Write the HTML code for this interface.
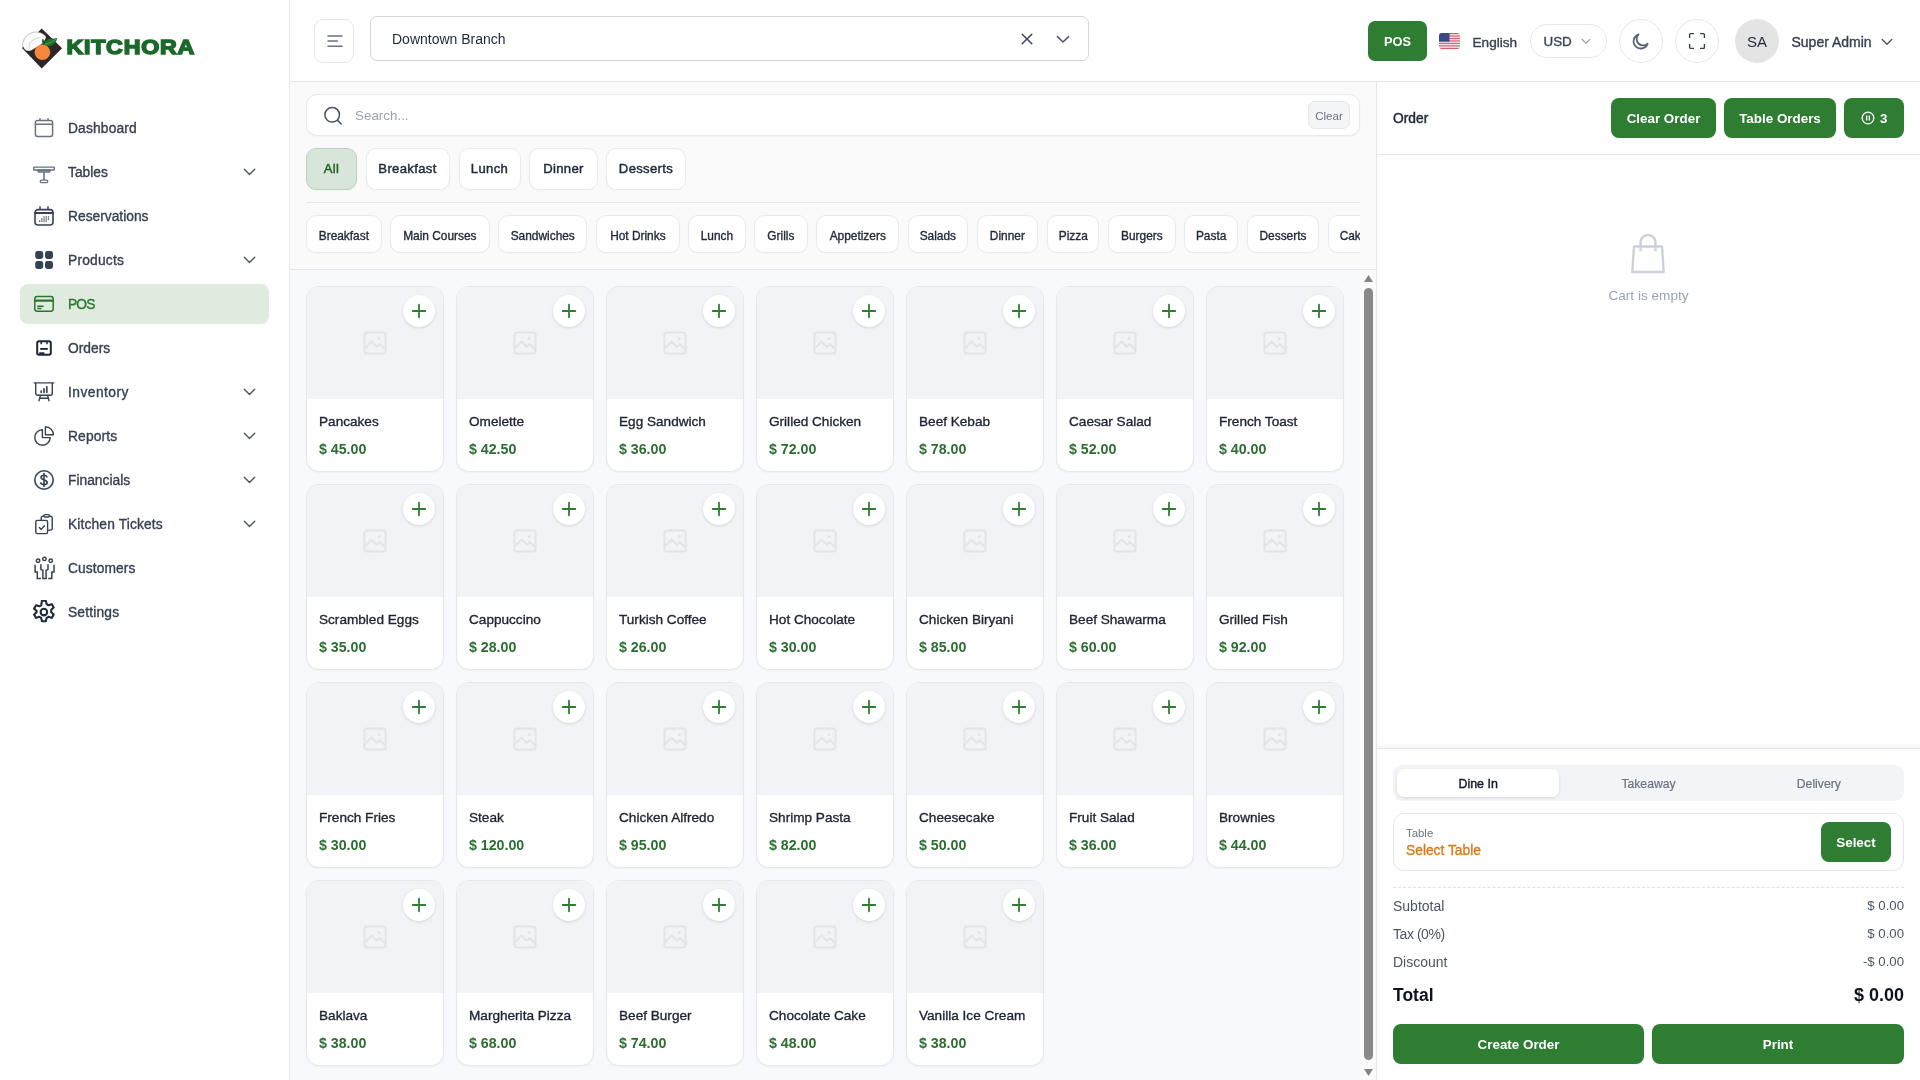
<!DOCTYPE html>
<html lang="en">
<head>
<meta charset="utf-8">
<title>Kitchora POS</title>
<style>
*{box-sizing:border-box;margin:0;padding:0}
html,body{width:1920px;height:1080px;overflow:hidden;background:#f8f9fc;font-family:"Liberation Sans",sans-serif;color:#1f2937}
div,span,svg{position:absolute}
#wrap{left:0;top:0;width:1920px;height:1080px;will-change:transform}
#side{left:0;top:0;width:290px;height:1080px;background:#fff;border-right:1px solid #e8e9ed}
.nav{left:20px;width:249px;height:40px;border-radius:8px;color:#374151;font-size:13.8px}
.nav svg.ic{left:12px;top:8px;width:24px;height:24px}
.nav span{left:48px;top:1px;line-height:40px;white-space:nowrap;-webkit-text-stroke:.35px currentColor}
.nav svg.ch{left:222.5px;top:15.7px;width:13px;height:8.4px}
.nav.on{background:#deebde;color:#2c7531}
#head{left:290px;top:0;width:1630px;height:82px;background:#fff;border-bottom:1px solid #e6e7eb}
#mid{left:290px;top:82px;width:1086px;height:998px;background:#f8f9fc}
#top{left:0;top:0;width:1086px;height:187px;background:#fafafa}
.pill{background:#fff;border:1px solid #e8eaed;border-radius:10px;text-align:center;color:#1f2937;white-space:nowrap;box-shadow:0 1px 2px rgba(16,24,40,.025)}
.cat{top:148px;height:42px;line-height:40.5px;font-size:13.1px;letter-spacing:.33px;-webkit-text-stroke:.45px currentColor}
.sub{top:215px;height:38px;line-height:41.5px;font-size:11.9px;-webkit-text-stroke:.35px currentColor}
.card{width:138px;height:186px;background:#fff;border:1px solid #e5e7eb;border-radius:13px;overflow:hidden;box-shadow:0 1px 2px rgba(16,24,40,.04)}
.card .im{left:0;top:0;width:136px;height:112px;background:#f2f3f7}
.card .im svg{left:56px;top:44px;width:24px;height:24px}
.card .pl{left:96px;top:8px;width:32px;height:32px;border-radius:50%;background:#fff;box-shadow:0 1px 3px rgba(0,0,0,.13)}
.card .pl svg{left:7px;top:7px;width:18px;height:18px}
.card .nm{left:12px;top:126px;font-size:13.6px;line-height:18px;color:#1f2433;white-space:nowrap;-webkit-text-stroke:.35px currentColor}
.card .pr{left:12px;top:152.9px;font-size:14.2px;line-height:18px;font-weight:bold;color:#2c6e31;white-space:nowrap}
#right{left:1376px;top:82px;width:544px;height:998px;background:#fff;border-left:1px solid #e5e7eb}
.gbtn{background:#2e7d32;color:#fff;border-radius:8px;text-align:center;font-weight:bold;font-size:13.4px;white-space:nowrap;height:40px;line-height:41px}
.row{left:1393px;width:511px;height:20px;font-size:14px;line-height:20px;color:#4b5563}
.row b{position:absolute;right:0;top:0;font-weight:normal;font-size:13.2px}
</style>
</head>
<body>
<div id="wrap">
<div id="side">
<svg style="left:18px;top:24px;width:190px;height:50px" viewBox="18 24 190 50">
<path d="M41.700 28.600 62.100 48.300 41.700 68.400 22 48.100z" fill="#2f2725"/>
<path d="M23.400 47.100C22.300 45.500 22.400 43.500 23.200 41.800 24 37.500 27.500 34 31.300 33 33 32.200 35 31.900 36.800 32.100 39.500 32.300 42 33.200 43.800 34.600 45 35.300 45.900 36.300 46.100 37.400L44.600 40.500 41.900 43.900 31.300 50.400C29.300 51.200 26.800 51 25.300 49.900 24.400 49.200 23.800 48.200 23.400 47.100Z" fill="#fbfdfc" stroke="#5a5a5a" stroke-width=".35"/>
<path d="M28.800 43.800C31 41 35 38.600 40.500 37.300M29.600 48.600C29 47 29.200 45.200 30.400 43.600" fill="none" stroke="#8a8f8c" stroke-width=".35"/>
<circle cx="42.400" cy="52.300" r="7.800" fill="#f6883c"/>
<path d="M43.800 44.500C46 45.900 48.800 46.300 50.900 45.700 54.200 44.600 56.600 41.700 57.200 37.900 55.400 38.600 53.300 38.300 51.200 38.500 48.600 38.800 46.600 39.800 45.400 41.300 44.600 42.300 44 43.400 43.800 44.500Z" fill="#1f6f2f"/>
<path d="M42.900 38.400C41.900 39.600 41.800 41.600 42.600 43 43.300 44 44.500 44.400 45.400 43.900 44.600 42.200 44 40 42.900 38.400Z" fill="#1b6129"/>
<path d="M44.600 44.300C48.400 43.700 52.800 41.800 56 38.900" fill="none" stroke="#7ed08a" stroke-width=".5"/>
<g transform="translate(66.400,54.200) scale(1.126,1)"><text x="0" y="0" font-family="Liberation Sans, sans-serif" font-weight="bold" font-size="20.600" fill="#1b692a" stroke="#1b692a" stroke-width="1.500" stroke-linejoin="miter" letter-spacing="0.700">KITCHORA</text></g>
</svg>
<div class="nav" style="top:108px"><svg class="ic" viewBox="0 0 24 24" fill="none" ><g stroke="#6b7280" stroke-width="1.500" stroke-linecap="round"><rect x="3.400" y="4.500" width="17.200" height="16" rx="2.200"/><path d="M3.600 8.300h16.800M8 2.800v1.500M16 2.800v1.500"/></g></svg><span style="letter-spacing:0.15px">Dashboard</span></div>
<div class="nav" style="top:152px"><svg class="ic" viewBox="0 0 24 24" fill="none" ><g stroke="#6b7280" stroke-width="1.400" stroke-linejoin="round"><rect x="1.700" y="7.100" width="20.600" height="2.900" rx=".4"/><path d="M5.600 10.200h12.800l-.8 1.900H6.400z" fill="#9aa0ab"/><path d="M12 12.200v7.800" stroke-width="1.600"/><rect x="8.300" y="20.100" width="7.400" height="2.500" rx="1.200"/></g></svg><span style="letter-spacing:0px">Tables</span><svg class="ch" viewBox="0 0 14 9" fill="none"><path d="M1.400 1.400 7 7l5.600-5.600" stroke="#4b5563" stroke-width="1.500" stroke-linecap="round" stroke-linejoin="round"/></svg></div>
<div class="nav" style="top:196px"><svg class="ic" viewBox="0 0 24 24" fill="none" ><g stroke="#374151" stroke-width="1.600" stroke-linecap="round"><rect x="3" y="5.600" width="18" height="15.400" rx="3"/><path d="M3.200 9h17.600" stroke-width="1.800"/><path d="M8 2.800v2.400M16 2.800v2.400" stroke-width="1.400"/></g><g fill="#374151"><rect x="7" y="16.400" width="1.300" height="1.300"/><rect x="9.200" y="16.400" width="1.300" height="1.300"/><rect x="9.200" y="14.400" width="1.300" height="1.300"/><rect x="11.400" y="16.400" width="1.300" height="1.300"/><rect x="11.400" y="14.400" width="1.300" height="1.300"/><rect x="11.400" y="12.400" width="1.300" height="1.200"/><rect x="13.600" y="16.400" width="1.300" height="1.300"/><rect x="13.600" y="14.400" width="1.300" height="1.300"/><rect x="13.600" y="12.400" width="1.300" height="1.200"/><rect x="15.800" y="12.400" width="1.300" height="1.200"/><rect x="15.800" y="14.400" width="1.300" height="1.300"/></g></svg><span style="letter-spacing:0px">Reservations</span></div>
<div class="nav" style="top:240px"><svg class="ic" viewBox="0 0 24 24" fill="none" ><g fill="#334155"><rect x="3.2" y="3" width="8" height="8" rx="2.4"/><rect x="13" y="3" width="8" height="8" rx="2.4"/><rect x="3.2" y="13" width="8" height="8" rx="2.4"/><rect x="13" y="13" width="8" height="8" rx="2.4"/></g></svg><span style="letter-spacing:0.2px">Products</span><svg class="ch" viewBox="0 0 14 9" fill="none"><path d="M1.400 1.400 7 7l5.600-5.600" stroke="#4b5563" stroke-width="1.500" stroke-linecap="round" stroke-linejoin="round"/></svg></div>
<div class="nav on" style="top:284px"><svg class="ic" viewBox="0 0 24 24" fill="none" ><g stroke="#2c7531" stroke-linecap="round"><rect x="2.800" y="4.600" width="18.400" height="14.600" rx="2.400" stroke-width="1.500"/><path d="M3 8.600h18" stroke-width="2.200"/><path d="M5.800 14.200h5.400M5.800 16.500h3.200" stroke-width="1.400"/></g></svg><span style="letter-spacing:-0.9px">POS</span></div>
<div class="nav" style="top:328px"><svg class="ic" viewBox="0 0 24 24" fill="none" ><g stroke="#1f2937" stroke-width="2"><rect x="5.200" y="5.200" width="13.600" height="13.600" rx="1.800"/><path d="M8.200 12.900h7.600" stroke-width="1.900"/><path d="M9.200 6v2.200M15 6v2.200" stroke-width="1.500"/></g><rect x="7.200" y="16.300" width="5.200" height="2.200" fill="#1f2937"/></svg><span style="letter-spacing:0px">Orders</span></div>
<div class="nav" style="top:372px"><svg class="ic" viewBox="0 0 24 24" fill="none" ><g stroke="#374151" stroke-width="1.400" stroke-linecap="round" stroke-linejoin="round"><path d="M2.200 2.900h19.600M3.700 3v10.300a2 2 0 0 0 2 2h12.600a2 2 0 0 0 2-2V3M8.400 15.500 7 20.800M15.600 15.500l1.400 5.300M7.800 18.200h8.400"/><path d="M9.200 11v1.300M12 8.800v3.500M14.800 6.800v5.500" stroke-width="1.700"/></g></svg><span style="letter-spacing:0.45px">Inventory</span><svg class="ch" viewBox="0 0 14 9" fill="none"><path d="M1.400 1.400 7 7l5.600-5.600" stroke="#4b5563" stroke-width="1.500" stroke-linecap="round" stroke-linejoin="round"/></svg></div>
<div class="nav" style="top:416px"><svg class="ic" viewBox="0 0 24 24" fill="none" ><g stroke="#374151" stroke-width="1.400" stroke-linejoin="round"><path d="M10.400 5.800a7.700 7.700 0 1 0 7.800 7.800h-7.800z"/><path d="M13.400 2.800v8h8a8 8 0 0 0-8-8z"/></g></svg><span style="letter-spacing:0.15px">Reports</span><svg class="ch" viewBox="0 0 14 9" fill="none"><path d="M1.400 1.400 7 7l5.600-5.600" stroke="#4b5563" stroke-width="1.500" stroke-linecap="round" stroke-linejoin="round"/></svg></div>
<div class="nav" style="top:460px"><svg class="ic" viewBox="0 0 24 24" fill="none" ><g stroke="#374151" stroke-width="1.6" stroke-linecap="round"><circle cx="12" cy="12" r="9.2"/><path d="M15 8.8c-.6-1-1.700-1.500-3-1.500-1.800 0-3 .9-3 2.300 0 3 6.200 1.600 6.200 4.700 0 1.500-1.400 2.400-3.200 2.400-1.500 0-2.700-.6-3.300-1.700M12 5.600v12.800"/></g></svg><span style="letter-spacing:0px">Financials</span><svg class="ch" viewBox="0 0 14 9" fill="none"><path d="M1.400 1.400 7 7l5.600-5.600" stroke="#4b5563" stroke-width="1.500" stroke-linecap="round" stroke-linejoin="round"/></svg></div>
<div class="nav" style="top:504px"><svg class="ic" viewBox="0 0 24 24" fill="none" ><g stroke="#374151" stroke-width="1.400" stroke-linejoin="round" stroke-linecap="round"><path d="M9.200 8V6a1.700 1.700 0 0 1 1.700-1.700h7.600A1.700 1.700 0 0 1 20.200 6V16.400a1.700 1.700 0 0 1-1.700 1.700H15.800"/><rect x="12" y="2.600" width="5.400" height="2.400" rx="1.200" fill="#fff"/><rect x="3.800" y="8.400" width="11.800" height="13.200" rx="1.600" fill="#fff"/><path d="M7.400 15.600l1.800 1.800 3.200-3.600"/></g></svg><span style="letter-spacing:0.13px">Kitchen Tickets</span><svg class="ch" viewBox="0 0 14 9" fill="none"><path d="M1.400 1.400 7 7l5.600-5.600" stroke="#4b5563" stroke-width="1.500" stroke-linecap="round" stroke-linejoin="round"/></svg></div>
<div class="nav" style="top:548px"><svg class="ic" viewBox="0 0 24 24" fill="none" ><g stroke="#374151" stroke-width="1.500" stroke-linecap="butt" stroke-linejoin="miter"><circle cx="12.400" cy="2.900" r="1.700"/><circle cx="6.100" cy="4.800" r="1.700"/><circle cx="18.700" cy="4.800" r="1.700"/><path d="M3.100 8.800V15.900H5.300V22.600H8.900M8.900 8.200V13.300L10.900 14.500V22.600H14.100V14.500L16 13.300V8.200M22 8.800V15.900H19.800V22.600H16.200"/></g></svg><span style="letter-spacing:0.08px">Customers</span></div>
<div class="nav" style="top:592px"><svg class="ic" viewBox="0 0 24 24" fill="none" ><g transform="translate(11.900 12.100) scale(1.090) translate(-12 -12)" stroke="#1f2937" stroke-width="1.900" stroke-linejoin="round"><path d="M10.200 1.600h3.600l.7 3.100 1.700 1 3-1 1.800 3.100-2.300 2.100v2.200l2.300 2.100-1.800 3.100-3-1-1.700 1-.7 3.100h-3.600l-.7-3.100-1.700-1-3 1-1.800-3.100 2.300-2.100V10.900L3 8.800l1.800-3.100 3 1 1.700-1z"/><circle cx="12" cy="12" r="3"/></g></svg><span style="letter-spacing:0.17px">Settings</span></div>
</div>
<div id="head">
<div style="left:24px;top:19px;width:40px;height:44px;border:1px solid #e5e7eb;border-radius:9px;background:#fff"><svg style="left:10.500px;top:12px;width:18px;height:18px" viewBox="0 0 18 18"><path d="M2 4h14M2 9h9.500M2 14.200h14" stroke="#6b7280" stroke-width="1.500" stroke-linecap="round"/></svg></div>
<div style="left:80px;top:16px;width:719px;height:45px;border:1px solid #d4d6da;border-radius:7px;background:#fff"><span style="left:21px;top:0;line-height:44px;font-size:14px;color:#1f2937;white-space:nowrap">Downtown Branch</span><svg style="left:650px;top:16px;width:12px;height:12px" viewBox="0 0 12 12"><path d="M1.200 1.200l9.600 9.600M10.800 1.200l-9.600 9.600" stroke="#374151" stroke-width="1.400" stroke-linecap="round"/></svg><svg style="left:685px;top:18px;width:14px;height:9px" viewBox="0 0 14 9"><path d="M1.400 1.600 7 7l5.600-5.400" stroke="#4b5563" stroke-width="1.500" stroke-linecap="round" stroke-linejoin="round" fill="none"/></svg></div>
<div class="gbtn" style="left:1078px;top:21px;width:59px;height:40px;line-height:41px;font-size:12.800px;border-radius:7px">POS</div>
<svg style="left:1149px;top:33px;width:21px;height:16px;border-radius:3px;overflow:hidden" viewBox="0 0 21 16"><rect width="21" height="16" fill="#f4f4f6"/><g fill="#dc5d69"><rect y="0" width="21" height="1.250"/><rect y="2.450" width="21" height="1.250"/><rect y="4.900" width="21" height="1.250"/><rect y="7.350" width="21" height="1.250"/><rect y="9.800" width="21" height="1.250"/><rect y="12.250" width="21" height="1.250"/><rect y="14.750" width="21" height="1.250"/></g><rect width="10.500" height="8.600" fill="#3b4a82"/></svg>
<span style="left:1182.500px;top:32.500px;line-height:20px;font-size:13.600px;color:#374151;-webkit-text-stroke:.35px currentColor">English</span>
<div style="left:1240px;top:24px;width:77px;height:34px;border:1px solid #e5e7eb;border-radius:17px;background:#fff"><span style="left:12.500px;top:0;line-height:33px;font-size:13.400px;color:#374151;-webkit-text-stroke:.35px currentColor">USD</span><svg style="left:50px;top:13px;width:10px;height:7px" viewBox="0 0 10 7"><path d="M1.200 1.400 5 5.200l3.800-3.800" stroke="#9ca3af" stroke-width="1.300" fill="none" stroke-linecap="round" stroke-linejoin="round"/></svg></div>
<div style="left:1329px;top:19px;width:44px;height:44px;border:1px solid #e5e7eb;border-radius:50%;background:#fff"><svg style="left:10.200px;top:12px;width:20px;height:20px" viewBox="0 0 20 20"><path d="M8.600 2.400a7.200 7.200 0 1 0 9 9.200 6.200 6.200 0 0 1-9-9.200z" stroke="#5b6478" stroke-width="1.800" fill="none" stroke-linejoin="round"/></svg></div>
<div style="left:1385px;top:19px;width:44px;height:44px;border:1px solid #e5e7eb;border-radius:50%;background:#fff"><svg style="left:12px;top:12px;width:18px;height:18px" viewBox="0 0 18 18"><path d="M1.600 6V2.600a1 1 0 0 1 1-1H6M12 1.600h3.400a1 1 0 0 1 1 1V6M16.400 12v3.400a1 1 0 0 1-1 1H12M6 16.400H2.600a1 1 0 0 1-1-1V12" stroke="#374151" stroke-width="1.400" fill="none"/></svg></div>
<div style="left:1445px;top:19px;width:44px;height:44px;border-radius:50%;background:#e4e4e5;text-align:center;line-height:45px;font-size:15px;color:#1f2937">SA</div>
<span style="left:1501.500px;top:31.500px;line-height:20px;font-size:14px;color:#374151;white-space:nowrap;-webkit-text-stroke:.35px currentColor">Super Admin</span>
<svg style="left:1591px;top:38px;width:12px;height:8px" viewBox="0 0 12 8"><path d="M1.200 1.400 6 6.200l4.800-4.800" stroke="#4b5563" stroke-width="1.400" fill="none" stroke-linecap="round" stroke-linejoin="round"/></svg>
</div>
<div id="mid">
<div id="top"></div>
<div style="left:16px;top:12px;width:1054px;height:42px;background:#fff;border:1px solid #e7e9ec;border-radius:11px;box-shadow:0 1px 2px rgba(16,24,40,.04)"><svg style="left:14.500px;top:10px;width:22px;height:22px" viewBox="0 0 22 22"><circle cx="10.200" cy="9.800" r="7.300" stroke="#4b5563" stroke-width="1.500" fill="none"/><path d="M15.600 15.400l3.600 3.600" stroke="#4b5563" stroke-width="1.600" stroke-linecap="round"/></svg><span style="left:48px;top:1px;line-height:40px;font-size:13.400px;color:#9ca3af;white-space:nowrap">Search...</span><div style="left:1001px;top:6px;width:42px;height:28px;border:1px solid #e5e7eb;background:#f4f5f7;border-radius:7px;text-align:center;line-height:28px;font-size:11.600px;color:#6b7280">Clear</div></div>
<div class="pill cat" style="left:16.00px;top:66px;width:51px;background:#d7e6d8;border-color:#b9d3bb;color:#245f29;">All</div>
<div class="pill cat" style="left:75.50px;top:66px;width:84px;">Breakfast</div>
<div class="pill cat" style="left:168.50px;top:66px;width:62px;">Lunch</div>
<div class="pill cat" style="left:239.25px;top:66px;width:68.5px;">Dinner</div>
<div class="pill cat" style="left:316.25px;top:66px;width:79.5px;">Desserts</div>
<div style="left:16px;top:120px;width:1054px;height:1px;background:#e6e8eb"></div>
<div style="left:16px;top:128px;width:1054px;height:50px;overflow:hidden">
<div class="pill sub" style="left:0.25px;top:5px;width:75.25px">Breakfast</div>
<div class="pill sub" style="left:84.25px;top:5px;width:99.25px">Main Courses</div>
<div class="pill sub" style="left:192.25px;top:5px;width:89px">Sandwiches</div>
<div class="pill sub" style="left:290.25px;top:5px;width:83.25px">Hot Drinks</div>
<div class="pill sub" style="left:382.25px;top:5px;width:57.25px">Lunch</div>
<div class="pill sub" style="left:448.25px;top:5px;width:53.25px">Grills</div>
<div class="pill sub" style="left:510.25px;top:5px;width:83px">Appetizers</div>
<div class="pill sub" style="left:602.25px;top:5px;width:59.25px">Salads</div>
<div class="pill sub" style="left:670.50px;top:5px;width:61.75px">Dinner</div>
<div class="pill sub" style="left:741.25px;top:5px;width:52px">Pizza</div>
<div class="pill sub" style="left:802.25px;top:5px;width:67.25px">Burgers</div>
<div class="pill sub" style="left:878.25px;top:5px;width:53.75px">Pasta</div>
<div class="pill sub" style="left:941.00px;top:5px;width:72px">Desserts</div>
<div class="pill sub" style="left:1021.50px;top:5px;width:58px">Cakes</div>
</div>
<div style="left:0;top:187px;width:1086px;height:1px;background:#e4e6e9"></div>
<div class="card" style="left:16px;top:204px"><div class="im"><svg viewBox="0 0 24 24" fill="none" stroke="#e2e4e9" stroke-width="2" stroke-linejoin="round"><rect x="1.400" y="1.400" width="21.200" height="21.200" rx="2.600"/><circle cx="16.200" cy="7.600" r="1.500" fill="#e2e4e9" stroke="none"/><path d="M1.800 17.400 8.600 10.600l5.200 5.200 3-2.800 5.400 5.200"/></svg></div><div class="pl"><svg viewBox="0 0 18 18"><path d="M9 2.700v12.600M2.700 9h12.600" stroke="#2e7d32" stroke-width="1.800" stroke-linecap="round"/></svg></div><span class="nm">Pancakes</span><span class="pr">$ 45.00</span></div>
<div class="card" style="left:166px;top:204px"><div class="im"><svg viewBox="0 0 24 24" fill="none" stroke="#e2e4e9" stroke-width="2" stroke-linejoin="round"><rect x="1.400" y="1.400" width="21.200" height="21.200" rx="2.600"/><circle cx="16.200" cy="7.600" r="1.500" fill="#e2e4e9" stroke="none"/><path d="M1.800 17.400 8.600 10.600l5.200 5.200 3-2.800 5.400 5.200"/></svg></div><div class="pl"><svg viewBox="0 0 18 18"><path d="M9 2.700v12.600M2.700 9h12.600" stroke="#2e7d32" stroke-width="1.800" stroke-linecap="round"/></svg></div><span class="nm">Omelette</span><span class="pr">$ 42.50</span></div>
<div class="card" style="left:316px;top:204px"><div class="im"><svg viewBox="0 0 24 24" fill="none" stroke="#e2e4e9" stroke-width="2" stroke-linejoin="round"><rect x="1.400" y="1.400" width="21.200" height="21.200" rx="2.600"/><circle cx="16.200" cy="7.600" r="1.500" fill="#e2e4e9" stroke="none"/><path d="M1.800 17.400 8.600 10.600l5.200 5.200 3-2.800 5.400 5.200"/></svg></div><div class="pl"><svg viewBox="0 0 18 18"><path d="M9 2.700v12.600M2.700 9h12.600" stroke="#2e7d32" stroke-width="1.800" stroke-linecap="round"/></svg></div><span class="nm">Egg Sandwich</span><span class="pr">$ 36.00</span></div>
<div class="card" style="left:466px;top:204px"><div class="im"><svg viewBox="0 0 24 24" fill="none" stroke="#e2e4e9" stroke-width="2" stroke-linejoin="round"><rect x="1.400" y="1.400" width="21.200" height="21.200" rx="2.600"/><circle cx="16.200" cy="7.600" r="1.500" fill="#e2e4e9" stroke="none"/><path d="M1.800 17.400 8.600 10.600l5.200 5.200 3-2.800 5.400 5.200"/></svg></div><div class="pl"><svg viewBox="0 0 18 18"><path d="M9 2.700v12.600M2.700 9h12.600" stroke="#2e7d32" stroke-width="1.800" stroke-linecap="round"/></svg></div><span class="nm">Grilled Chicken</span><span class="pr">$ 72.00</span></div>
<div class="card" style="left:616px;top:204px"><div class="im"><svg viewBox="0 0 24 24" fill="none" stroke="#e2e4e9" stroke-width="2" stroke-linejoin="round"><rect x="1.400" y="1.400" width="21.200" height="21.200" rx="2.600"/><circle cx="16.200" cy="7.600" r="1.500" fill="#e2e4e9" stroke="none"/><path d="M1.800 17.400 8.600 10.600l5.200 5.200 3-2.800 5.400 5.200"/></svg></div><div class="pl"><svg viewBox="0 0 18 18"><path d="M9 2.700v12.600M2.700 9h12.600" stroke="#2e7d32" stroke-width="1.800" stroke-linecap="round"/></svg></div><span class="nm">Beef Kebab</span><span class="pr">$ 78.00</span></div>
<div class="card" style="left:766px;top:204px"><div class="im"><svg viewBox="0 0 24 24" fill="none" stroke="#e2e4e9" stroke-width="2" stroke-linejoin="round"><rect x="1.400" y="1.400" width="21.200" height="21.200" rx="2.600"/><circle cx="16.200" cy="7.600" r="1.500" fill="#e2e4e9" stroke="none"/><path d="M1.800 17.400 8.600 10.600l5.200 5.200 3-2.800 5.400 5.200"/></svg></div><div class="pl"><svg viewBox="0 0 18 18"><path d="M9 2.700v12.600M2.700 9h12.600" stroke="#2e7d32" stroke-width="1.800" stroke-linecap="round"/></svg></div><span class="nm">Caesar Salad</span><span class="pr">$ 52.00</span></div>
<div class="card" style="left:916px;top:204px"><div class="im"><svg viewBox="0 0 24 24" fill="none" stroke="#e2e4e9" stroke-width="2" stroke-linejoin="round"><rect x="1.400" y="1.400" width="21.200" height="21.200" rx="2.600"/><circle cx="16.200" cy="7.600" r="1.500" fill="#e2e4e9" stroke="none"/><path d="M1.800 17.400 8.600 10.600l5.200 5.200 3-2.800 5.400 5.200"/></svg></div><div class="pl"><svg viewBox="0 0 18 18"><path d="M9 2.700v12.600M2.700 9h12.600" stroke="#2e7d32" stroke-width="1.800" stroke-linecap="round"/></svg></div><span class="nm">French Toast</span><span class="pr">$ 40.00</span></div>
<div class="card" style="left:16px;top:402px"><div class="im"><svg viewBox="0 0 24 24" fill="none" stroke="#e2e4e9" stroke-width="2" stroke-linejoin="round"><rect x="1.400" y="1.400" width="21.200" height="21.200" rx="2.600"/><circle cx="16.200" cy="7.600" r="1.500" fill="#e2e4e9" stroke="none"/><path d="M1.800 17.400 8.600 10.600l5.200 5.200 3-2.800 5.400 5.200"/></svg></div><div class="pl"><svg viewBox="0 0 18 18"><path d="M9 2.700v12.600M2.700 9h12.600" stroke="#2e7d32" stroke-width="1.800" stroke-linecap="round"/></svg></div><span class="nm">Scrambled Eggs</span><span class="pr">$ 35.00</span></div>
<div class="card" style="left:166px;top:402px"><div class="im"><svg viewBox="0 0 24 24" fill="none" stroke="#e2e4e9" stroke-width="2" stroke-linejoin="round"><rect x="1.400" y="1.400" width="21.200" height="21.200" rx="2.600"/><circle cx="16.200" cy="7.600" r="1.500" fill="#e2e4e9" stroke="none"/><path d="M1.800 17.400 8.600 10.600l5.200 5.200 3-2.800 5.400 5.200"/></svg></div><div class="pl"><svg viewBox="0 0 18 18"><path d="M9 2.700v12.600M2.700 9h12.600" stroke="#2e7d32" stroke-width="1.800" stroke-linecap="round"/></svg></div><span class="nm">Cappuccino</span><span class="pr">$ 28.00</span></div>
<div class="card" style="left:316px;top:402px"><div class="im"><svg viewBox="0 0 24 24" fill="none" stroke="#e2e4e9" stroke-width="2" stroke-linejoin="round"><rect x="1.400" y="1.400" width="21.200" height="21.200" rx="2.600"/><circle cx="16.200" cy="7.600" r="1.500" fill="#e2e4e9" stroke="none"/><path d="M1.800 17.400 8.600 10.600l5.200 5.200 3-2.800 5.400 5.200"/></svg></div><div class="pl"><svg viewBox="0 0 18 18"><path d="M9 2.700v12.600M2.700 9h12.600" stroke="#2e7d32" stroke-width="1.800" stroke-linecap="round"/></svg></div><span class="nm">Turkish Coffee</span><span class="pr">$ 26.00</span></div>
<div class="card" style="left:466px;top:402px"><div class="im"><svg viewBox="0 0 24 24" fill="none" stroke="#e2e4e9" stroke-width="2" stroke-linejoin="round"><rect x="1.400" y="1.400" width="21.200" height="21.200" rx="2.600"/><circle cx="16.200" cy="7.600" r="1.500" fill="#e2e4e9" stroke="none"/><path d="M1.800 17.400 8.600 10.600l5.200 5.200 3-2.800 5.400 5.200"/></svg></div><div class="pl"><svg viewBox="0 0 18 18"><path d="M9 2.700v12.600M2.700 9h12.600" stroke="#2e7d32" stroke-width="1.800" stroke-linecap="round"/></svg></div><span class="nm">Hot Chocolate</span><span class="pr">$ 30.00</span></div>
<div class="card" style="left:616px;top:402px"><div class="im"><svg viewBox="0 0 24 24" fill="none" stroke="#e2e4e9" stroke-width="2" stroke-linejoin="round"><rect x="1.400" y="1.400" width="21.200" height="21.200" rx="2.600"/><circle cx="16.200" cy="7.600" r="1.500" fill="#e2e4e9" stroke="none"/><path d="M1.800 17.400 8.600 10.600l5.200 5.200 3-2.800 5.400 5.200"/></svg></div><div class="pl"><svg viewBox="0 0 18 18"><path d="M9 2.700v12.600M2.700 9h12.600" stroke="#2e7d32" stroke-width="1.800" stroke-linecap="round"/></svg></div><span class="nm">Chicken Biryani</span><span class="pr">$ 85.00</span></div>
<div class="card" style="left:766px;top:402px"><div class="im"><svg viewBox="0 0 24 24" fill="none" stroke="#e2e4e9" stroke-width="2" stroke-linejoin="round"><rect x="1.400" y="1.400" width="21.200" height="21.200" rx="2.600"/><circle cx="16.200" cy="7.600" r="1.500" fill="#e2e4e9" stroke="none"/><path d="M1.800 17.400 8.600 10.600l5.200 5.200 3-2.800 5.400 5.200"/></svg></div><div class="pl"><svg viewBox="0 0 18 18"><path d="M9 2.700v12.600M2.700 9h12.600" stroke="#2e7d32" stroke-width="1.800" stroke-linecap="round"/></svg></div><span class="nm">Beef Shawarma</span><span class="pr">$ 60.00</span></div>
<div class="card" style="left:916px;top:402px"><div class="im"><svg viewBox="0 0 24 24" fill="none" stroke="#e2e4e9" stroke-width="2" stroke-linejoin="round"><rect x="1.400" y="1.400" width="21.200" height="21.200" rx="2.600"/><circle cx="16.200" cy="7.600" r="1.500" fill="#e2e4e9" stroke="none"/><path d="M1.800 17.400 8.600 10.600l5.200 5.200 3-2.800 5.400 5.200"/></svg></div><div class="pl"><svg viewBox="0 0 18 18"><path d="M9 2.700v12.600M2.700 9h12.600" stroke="#2e7d32" stroke-width="1.800" stroke-linecap="round"/></svg></div><span class="nm">Grilled Fish</span><span class="pr">$ 92.00</span></div>
<div class="card" style="left:16px;top:600px"><div class="im"><svg viewBox="0 0 24 24" fill="none" stroke="#e2e4e9" stroke-width="2" stroke-linejoin="round"><rect x="1.400" y="1.400" width="21.200" height="21.200" rx="2.600"/><circle cx="16.200" cy="7.600" r="1.500" fill="#e2e4e9" stroke="none"/><path d="M1.800 17.400 8.600 10.600l5.200 5.200 3-2.800 5.400 5.200"/></svg></div><div class="pl"><svg viewBox="0 0 18 18"><path d="M9 2.700v12.600M2.700 9h12.600" stroke="#2e7d32" stroke-width="1.800" stroke-linecap="round"/></svg></div><span class="nm">French Fries</span><span class="pr">$ 30.00</span></div>
<div class="card" style="left:166px;top:600px"><div class="im"><svg viewBox="0 0 24 24" fill="none" stroke="#e2e4e9" stroke-width="2" stroke-linejoin="round"><rect x="1.400" y="1.400" width="21.200" height="21.200" rx="2.600"/><circle cx="16.200" cy="7.600" r="1.500" fill="#e2e4e9" stroke="none"/><path d="M1.800 17.400 8.600 10.600l5.200 5.200 3-2.800 5.400 5.200"/></svg></div><div class="pl"><svg viewBox="0 0 18 18"><path d="M9 2.700v12.600M2.700 9h12.600" stroke="#2e7d32" stroke-width="1.800" stroke-linecap="round"/></svg></div><span class="nm">Steak</span><span class="pr">$ 120.00</span></div>
<div class="card" style="left:316px;top:600px"><div class="im"><svg viewBox="0 0 24 24" fill="none" stroke="#e2e4e9" stroke-width="2" stroke-linejoin="round"><rect x="1.400" y="1.400" width="21.200" height="21.200" rx="2.600"/><circle cx="16.200" cy="7.600" r="1.500" fill="#e2e4e9" stroke="none"/><path d="M1.800 17.400 8.600 10.600l5.200 5.200 3-2.800 5.400 5.200"/></svg></div><div class="pl"><svg viewBox="0 0 18 18"><path d="M9 2.700v12.600M2.700 9h12.600" stroke="#2e7d32" stroke-width="1.800" stroke-linecap="round"/></svg></div><span class="nm">Chicken Alfredo</span><span class="pr">$ 95.00</span></div>
<div class="card" style="left:466px;top:600px"><div class="im"><svg viewBox="0 0 24 24" fill="none" stroke="#e2e4e9" stroke-width="2" stroke-linejoin="round"><rect x="1.400" y="1.400" width="21.200" height="21.200" rx="2.600"/><circle cx="16.200" cy="7.600" r="1.500" fill="#e2e4e9" stroke="none"/><path d="M1.800 17.400 8.600 10.600l5.200 5.200 3-2.800 5.400 5.200"/></svg></div><div class="pl"><svg viewBox="0 0 18 18"><path d="M9 2.700v12.600M2.700 9h12.600" stroke="#2e7d32" stroke-width="1.800" stroke-linecap="round"/></svg></div><span class="nm">Shrimp Pasta</span><span class="pr">$ 82.00</span></div>
<div class="card" style="left:616px;top:600px"><div class="im"><svg viewBox="0 0 24 24" fill="none" stroke="#e2e4e9" stroke-width="2" stroke-linejoin="round"><rect x="1.400" y="1.400" width="21.200" height="21.200" rx="2.600"/><circle cx="16.200" cy="7.600" r="1.500" fill="#e2e4e9" stroke="none"/><path d="M1.800 17.400 8.600 10.600l5.200 5.200 3-2.800 5.400 5.200"/></svg></div><div class="pl"><svg viewBox="0 0 18 18"><path d="M9 2.700v12.600M2.700 9h12.600" stroke="#2e7d32" stroke-width="1.800" stroke-linecap="round"/></svg></div><span class="nm">Cheesecake</span><span class="pr">$ 50.00</span></div>
<div class="card" style="left:766px;top:600px"><div class="im"><svg viewBox="0 0 24 24" fill="none" stroke="#e2e4e9" stroke-width="2" stroke-linejoin="round"><rect x="1.400" y="1.400" width="21.200" height="21.200" rx="2.600"/><circle cx="16.200" cy="7.600" r="1.500" fill="#e2e4e9" stroke="none"/><path d="M1.800 17.400 8.600 10.600l5.200 5.200 3-2.800 5.400 5.200"/></svg></div><div class="pl"><svg viewBox="0 0 18 18"><path d="M9 2.700v12.600M2.700 9h12.600" stroke="#2e7d32" stroke-width="1.800" stroke-linecap="round"/></svg></div><span class="nm">Fruit Salad</span><span class="pr">$ 36.00</span></div>
<div class="card" style="left:916px;top:600px"><div class="im"><svg viewBox="0 0 24 24" fill="none" stroke="#e2e4e9" stroke-width="2" stroke-linejoin="round"><rect x="1.400" y="1.400" width="21.200" height="21.200" rx="2.600"/><circle cx="16.200" cy="7.600" r="1.500" fill="#e2e4e9" stroke="none"/><path d="M1.800 17.400 8.600 10.600l5.200 5.200 3-2.800 5.400 5.200"/></svg></div><div class="pl"><svg viewBox="0 0 18 18"><path d="M9 2.700v12.600M2.700 9h12.600" stroke="#2e7d32" stroke-width="1.800" stroke-linecap="round"/></svg></div><span class="nm">Brownies</span><span class="pr">$ 44.00</span></div>
<div class="card" style="left:16px;top:798px"><div class="im"><svg viewBox="0 0 24 24" fill="none" stroke="#e2e4e9" stroke-width="2" stroke-linejoin="round"><rect x="1.400" y="1.400" width="21.200" height="21.200" rx="2.600"/><circle cx="16.200" cy="7.600" r="1.500" fill="#e2e4e9" stroke="none"/><path d="M1.800 17.400 8.600 10.600l5.200 5.200 3-2.800 5.400 5.200"/></svg></div><div class="pl"><svg viewBox="0 0 18 18"><path d="M9 2.700v12.600M2.700 9h12.600" stroke="#2e7d32" stroke-width="1.800" stroke-linecap="round"/></svg></div><span class="nm">Baklava</span><span class="pr">$ 38.00</span></div>
<div class="card" style="left:166px;top:798px"><div class="im"><svg viewBox="0 0 24 24" fill="none" stroke="#e2e4e9" stroke-width="2" stroke-linejoin="round"><rect x="1.400" y="1.400" width="21.200" height="21.200" rx="2.600"/><circle cx="16.200" cy="7.600" r="1.500" fill="#e2e4e9" stroke="none"/><path d="M1.800 17.400 8.600 10.600l5.200 5.200 3-2.800 5.400 5.200"/></svg></div><div class="pl"><svg viewBox="0 0 18 18"><path d="M9 2.700v12.600M2.700 9h12.600" stroke="#2e7d32" stroke-width="1.800" stroke-linecap="round"/></svg></div><span class="nm">Margherita Pizza</span><span class="pr">$ 68.00</span></div>
<div class="card" style="left:316px;top:798px"><div class="im"><svg viewBox="0 0 24 24" fill="none" stroke="#e2e4e9" stroke-width="2" stroke-linejoin="round"><rect x="1.400" y="1.400" width="21.200" height="21.200" rx="2.600"/><circle cx="16.200" cy="7.600" r="1.500" fill="#e2e4e9" stroke="none"/><path d="M1.800 17.400 8.600 10.600l5.200 5.200 3-2.800 5.400 5.200"/></svg></div><div class="pl"><svg viewBox="0 0 18 18"><path d="M9 2.700v12.600M2.700 9h12.600" stroke="#2e7d32" stroke-width="1.800" stroke-linecap="round"/></svg></div><span class="nm">Beef Burger</span><span class="pr">$ 74.00</span></div>
<div class="card" style="left:466px;top:798px"><div class="im"><svg viewBox="0 0 24 24" fill="none" stroke="#e2e4e9" stroke-width="2" stroke-linejoin="round"><rect x="1.400" y="1.400" width="21.200" height="21.200" rx="2.600"/><circle cx="16.200" cy="7.600" r="1.500" fill="#e2e4e9" stroke="none"/><path d="M1.800 17.400 8.600 10.600l5.200 5.200 3-2.800 5.400 5.200"/></svg></div><div class="pl"><svg viewBox="0 0 18 18"><path d="M9 2.700v12.600M2.700 9h12.600" stroke="#2e7d32" stroke-width="1.800" stroke-linecap="round"/></svg></div><span class="nm">Chocolate Cake</span><span class="pr">$ 48.00</span></div>
<div class="card" style="left:616px;top:798px"><div class="im"><svg viewBox="0 0 24 24" fill="none" stroke="#e2e4e9" stroke-width="2" stroke-linejoin="round"><rect x="1.400" y="1.400" width="21.200" height="21.200" rx="2.600"/><circle cx="16.200" cy="7.600" r="1.500" fill="#e2e4e9" stroke="none"/><path d="M1.800 17.400 8.600 10.600l5.200 5.200 3-2.800 5.400 5.200"/></svg></div><div class="pl"><svg viewBox="0 0 18 18"><path d="M9 2.700v12.600M2.700 9h12.600" stroke="#2e7d32" stroke-width="1.800" stroke-linecap="round"/></svg></div><span class="nm">Vanilla Ice Cream</span><span class="pr">$ 38.00</span></div>
<div style="left:1070px;top:188px;width:16px;height:810px;background:#fafafa"></div>
<svg style="left:1073px;top:192px;width:11px;height:9px" viewBox="0 0 11 9"><path d="M5.500 1 10 8H1z" fill="#858585"/></svg>
<div style="left:1074px;top:206px;width:9px;height:772px;border-radius:4.500px;background:#8a8a8a"></div>
<svg style="left:1073px;top:986px;width:11px;height:9px" viewBox="0 0 11 9"><path d="M1 1h9L5.500 8z" fill="#858585"/></svg>
</div>
<div id="right">
<span class="" style="left:16px;top:27px;line-height:20px;font-size:13.800px;color:#1f2937;-webkit-text-stroke:.45px currentColor">Order</span>
<div class="gbtn" style="left:234px;top:16px;width:105px">Clear Order</div>
<div class="gbtn" style="left:347px;top:16px;width:112px">Table Orders</div>
<div class="gbtn" style="left:467px;top:16px;width:60px"><svg style="left:17px;top:13px;width:14px;height:14px" viewBox="0 0 14 14"><circle cx="7" cy="7" r="5.800" stroke="#fff" stroke-width="1.300" fill="none"/><path d="M5.700 4.600v4.800M8.300 4.600v4.800" stroke="#fff" stroke-width="1.300"/></svg><span style="left:36px;top:0;line-height:41px">3</span></div>
<div style="left:0;top:72px;width:543px;height:1px;background:#e6e8eb"></div>
<svg style="left:251px;top:150px;width:40px;height:42px" viewBox="0 0 40 42"><path d="M6 14.500h28l1.700 25.500H4.300z" stroke="#cdd1dc" stroke-width="2.400" fill="none" stroke-linejoin="round"/><path d="M12.500 19.500V10.500a7.500 7.500 0 0 1 15 0v9" stroke="#cdd1dc" stroke-width="2.400" fill="none"/></svg>
<div style="left:0;top:203.5px;width:543px;text-align:center;line-height:20px;font-size:13.600px;color:#9ca3af">Cart is empty</div>
<div style="left:0;top:660px;width:543px;height:6px;background:linear-gradient(to bottom,rgba(0,0,0,0),rgba(0,0,0,.035))"></div>
<div style="left:0;top:666px;width:543px;height:1px;background:#e5e7eb"></div>
<div style="left:16px;top:683px;width:511px;height:36px;background:#f2f4f7;border-radius:9px"><div style="left:4px;top:4px;width:162.330px;height:28px;background:#fff;border-radius:7px;box-shadow:0 1px 3px rgba(0,0,0,.12);text-align:center;line-height:30px;font-size:12.400px;color:#111827;-webkit-text-stroke:.4px currentColor">Dine In</div><div style="left:174.330px;top:4px;width:162.330px;height:28px;text-align:center;line-height:30px;font-size:12.200px;color:#6b7280;-webkit-text-stroke:.2px currentColor">Takeaway</div><div style="left:344.660px;top:4px;width:162.330px;height:28px;text-align:center;line-height:30px;font-size:12.200px;color:#6b7280;-webkit-text-stroke:.2px currentColor">Delivery</div></div>
<div style="left:16px;top:731px;width:511px;height:58px;border:1px solid #e5e7eb;border-radius:11px;background:#fff"><span style="left:12px;top:11px;line-height:16px;font-size:11.400px;color:#6b7280">Table</span><span style="left:12px;top:27px;line-height:20px;font-size:13.800px;color:#d97a16;-webkit-text-stroke:.35px currentColor;white-space:nowrap">Select Table</span><div class="gbtn" style="left:427px;top:8px;width:70px">Select</div></div>
<div style="left:16px;top:805px;width:511px;height:0;border-top:1px dashed #dfe2e6"></div>
</div>
<div class="row" style="top:896px;">Subtotal<b style="letter-spacing:0">$ 0.00</b></div>
<div class="row" style="top:924px;letter-spacing:-.45px;">Tax (0%)<b style="letter-spacing:0">$ 0.00</b></div>
<div class="row" style="top:952px;">Discount<b style="letter-spacing:0">-$ 0.00</b></div>
<div class="row" style="top:982px;height:26px;line-height:26px;font-size:17.500px;font-weight:bold;color:#0b1220">Total<b style="font-weight:bold;font-size:18px">$ 0.00</b></div>
<div class="gbtn" style="left:1393px;top:1024px;width:251px">Create Order</div>
<div class="gbtn" style="left:1652px;top:1024px;width:252px">Print</div>
</div>
</body>
</html>
